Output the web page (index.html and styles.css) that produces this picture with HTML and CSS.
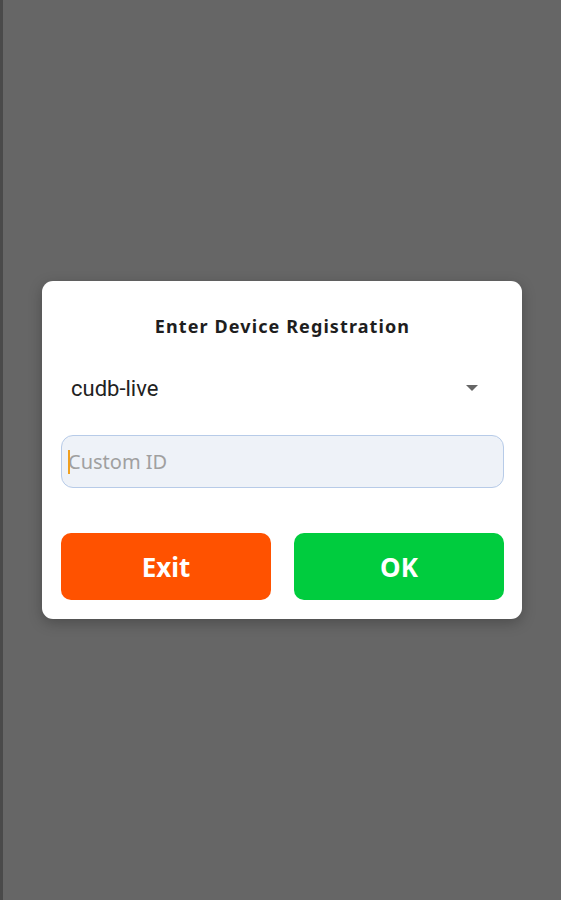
FILE: index.html
```html
<!DOCTYPE html>
<html lang="en">
<head>
  <meta charset="UTF-8" />
  <meta name="viewport" content="width=device-width, initial-scale=1.0"/>
  <title>Device Registration</title>
  <link rel="stylesheet" href="styles.css">
</head>
<body>
  <div class="screen">
    <div class="dialog">
      <h2 class="dialog-title">Enter Device Registration</h2>

      <div class="select-row">
        <span class="select-value">cudb-live</span>
        <svg class="select-arrow" width="12" height="6" viewBox="0 0 12 6">
          <path d="M0 0 L12 0 L6 6 Z" fill="#666"/>
        </svg>
      </div>

      <div class="input-box">
        <span class="caret"></span>
        <input type="text" placeholder="Custom ID">
      </div>

      <div class="actions">
        <button class="btn btn-exit">Exit</button>
        <button class="btn btn-ok">OK</button>
      </div>
    </div>
  </div>
</body>
</html>
```

FILE: styles.css
```css
body {
  margin: 0;
  padding: 0;
  background: #666666;
  font-family: "Noto Sans", Lato, sans-serif;
}
.screen {
  height: 900px;
  box-sizing: border-box;
  border-left: 3px solid #4a4a4a;
  display: flex;
  align-items: center;
  padding-left: 39px;
}
.dialog {
  width: 480px;
  box-sizing: border-box;
  background: white;
  border-radius: 11px;
  padding: 33px 18px 19px 19px;
  box-shadow: 0 4px 14px rgba(0,0,0,0.25);
}
.dialog-title {
  margin: 0;
  text-align: center;
  font-family: "Noto Sans", sans-serif;
  font-size: 18px;
  line-height: 24px;
  font-weight: bold;
  letter-spacing: 1.1px;
  color: #1e1e1e;
}
.select-row {
  margin-top: 26px;
  height: 48px;
  display: flex;
  align-items: center;
  justify-content: space-between;
  padding: 0 26px 0 10px;
}
.select-value {
  font-family: Roboto, "Noto Sans", sans-serif;
  font-size: 22px;
  color: #222;
}
.input-box {
  margin-top: 23px;
  height: 53px;
  box-sizing: border-box;
  background: #eef2f8;
  border: 1px solid #b7cbe8;
  border-radius: 12px;
  display: flex;
  align-items: center;
  padding-left: 6px;
  position: relative;
}
.caret {
  position: absolute;
  left: 6px;
  top: 14px;
  width: 2px;
  height: 24px;
  background: #f0a020;
}
.input-box input {
  border: none;
  outline: none;
  background: transparent;
  width: 100%;
  font-family: "Noto Sans", Lato, sans-serif;
  font-size: 20px;
  color: #333;
  padding: 0;
}
.input-box input::placeholder {
  color: #a0a0a0;
}
.actions {
  margin-top: 45px;
  display: flex;
  gap: 23px;
}
.btn {
  flex: 1;
  height: 67px;
  border: none;
  border-radius: 10px;
  color: white;
  font-family: "Noto Sans", Lato, sans-serif;
  font-size: 26px;
  font-weight: bold;
  cursor: pointer;
}
.btn-exit {
  background-color: #ff5200;
}
.btn-ok {
  background-color: #00cc3e;
}
```
